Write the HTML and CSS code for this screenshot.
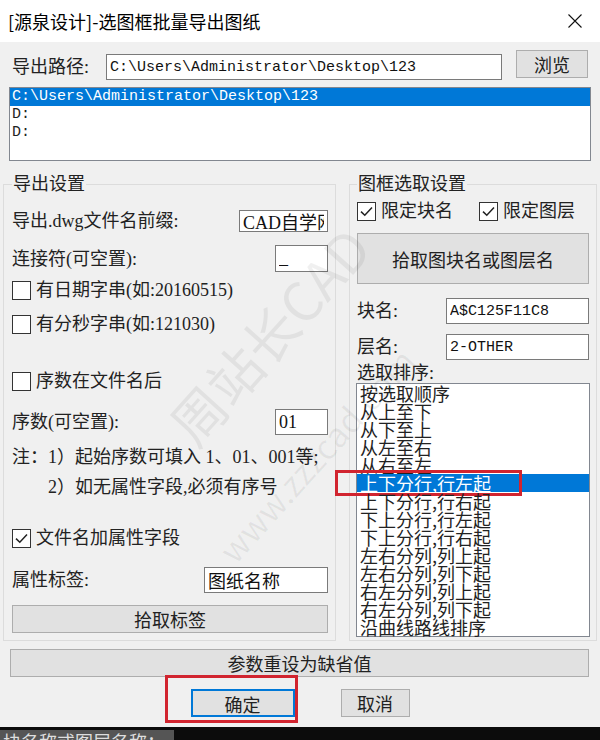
FILE: index.html
```html
<!DOCTYPE html>
<html lang="zh-CN">
<head>
  <meta charset="UTF-8">
  <title>[源泉设计]-选图框批量导出图纸</title>
  <link rel="stylesheet" href="styles.css">
</head>
<body>
  <div class="dialog">
    <div class="titlebar">
      <span class="title">[源泉设计]-选图框批量导出图纸</span>
      <span class="close">
        <svg width="16" height="16" viewBox="0 0 16 16"><path d="M1.5 1.5L14.5 14.5M14.5 1.5L1.5 14.5" stroke="#111" stroke-width="1.1" fill="none"/></svg>
      </span>
    </div>

    <div class="path-row">
      <span class="path-label">导出路径:</span>
      <input class="field path-field mono" type="text" value="C:\Users\Administrator\Desktop\123">
      <button class="btn browse">浏览</button>
    </div>

    <ul class="listbox path-list mono">
      <li class="selected">C:\Users\Administrator\Desktop\123</li>
      <li>D:</li>
      <li>D:</li>
    </ul>

    <div class="groups">
      <!-- left: export options -->
      <fieldset class="group export">
        <legend>导出设置</legend>
        <div class="row r-prefix">
          <span>导出.dwg文件名前缀:</span>
          <input class="field f-prefix" type="text" value="CAD自学网站">
        </div>
        <div class="row r-joiner">
          <span>连接符(可空置):</span>
          <input class="field f-small" type="text" value="_">
        </div>
        <label class="check r-date"><span class="box"></span>有日期字串(如:20160515)</label>
        <label class="check r-time"><span class="box"></span>有分秒字串(如:121030)</label>
        <label class="check r-after"><span class="box"></span>序数在文件名后</label>
        <div class="row r-seq">
          <span>序数(可空置):</span>
          <input class="field f-seq" type="text" value="01">
        </div>
        <p class="note r-note1">注：1）起始序数可填入 1、01、001等;</p>
        <p class="note r-note2">2）如无属性字段,必须有序号</p>
        <label class="check r-attr">
          <span class="box"><svg width="15" height="15" viewBox="0 0 15 15"><path d="M2 7.6L5.8 11.3L13 3.6" stroke="#222" stroke-width="1.5" fill="none"/></svg></span>文件名加属性字段
        </label>
        <div class="row r-tag">
          <span>属性标签:</span>
          <input class="field f-tag" type="text" value="图纸名称">
        </div>
        <button class="btn r-pick">拾取标签</button>
      </fieldset>

      <!-- right: frame selection -->
      <fieldset class="group frame">
        <legend>图框选取设置</legend>
        <div class="checks">
          <label class="check">
            <span class="box"><svg width="15" height="15" viewBox="0 0 15 15"><path d="M2 7.6L5.8 11.3L13 3.6" stroke="#222" stroke-width="1.5" fill="none"/></svg></span>限定块名
          </label>
          <label class="check">
            <span class="box"><svg width="15" height="15" viewBox="0 0 15 15"><path d="M2 7.6L5.8 11.3L13 3.6" stroke="#222" stroke-width="1.5" fill="none"/></svg></span>限定图层
          </label>
        </div>
        <button class="btn pick-block">拾取图块名或图层名</button>
        <div class="row r-block">
          <span>块名:</span>
          <input class="field f-name mono" type="text" value="A$C125F11C8">
        </div>
        <div class="row r-layer">
          <span>层名:</span>
          <input class="field f-name mono" type="text" value="2-OTHER">
        </div>
        <div class="sort-label">选取排序:</div>
        <ul class="listbox sort-list">
          <li>按选取顺序</li>
          <li>从上至下</li>
          <li>从下至上</li>
          <li>从左至右</li>
          <li>从右至左</li>
          <li class="selected">上下分行,行左起<span class="mark mark-sel"></span></li>
          <li>上下分行,行右起</li>
          <li>下上分行,行左起</li>
          <li>下上分行,行右起</li>
          <li>左右分列,列上起</li>
          <li>左右分列,列下起</li>
          <li>右左分列,列上起</li>
          <li>右左分列,列下起</li>
          <li>沿曲线路线排序</li>
        </ul>
      </fieldset>
    </div>

    <button class="btn reset">参数重设为缺省值</button>

    <div class="actions">
      <span class="ok-wrap">
        <button class="btn ok">确定</button>
        <span class="mark mark-ok"></span>
      </span>
      <button class="btn cancel">取消</button>
    </div>

    <div class="cmdbar"><span class="cmd-text">块名称或图层名称：</span></div>

    <div class="watermark">
      <span class="wm-1">周站长CAD</span>
      <span class="wm-2">www.zzzcad.com</span>
    </div>
  </div>
</body>
</html>
```

FILE: styles.css
```css
/* reset */
* {
  margin: 0;
  padding: 0;
  box-sizing: border-box;
}

body {
  width: 600px;
  height: 740px;
  overflow: hidden;
  background: #f0f0f0;
  font-family: "Liberation Serif", "Noto Sans CJK SC", serif;
  font-size: 18px;
  color: #222;
}

.dialog {
  position: relative;
  width: 600px;
  height: 740px;
  display: flex;
  flex-direction: column;
  background: #f0f0f0;
}

/* title bar */
.titlebar {
  height: 42px;
  flex: 0 0 42px;
  background: #fff;
  display: flex;
  align-items: center;
  justify-content: space-between;
  padding: 0 17px 0 8px;
  font-family: "Noto Sans CJK SC", sans-serif;
  color: #000;
}

.title {
  font-size: 18px;
  line-height: 24px;
}

.close {
  display: flex;
  width: 16px;
  height: 16px;
}

/* common controls */
.field {
  display: block;
  height: 26px;
  border: 1px solid #7a7a7a;
  background: #fff;
  padding: 0 3px;
  font: inherit;
  color: #111;
  outline: none;
}

.mono {
  font-family: "Liberation Mono", "Noto Sans CJK SC", monospace;
  font-size: 15px;
}

.btn {
  height: 28px;
  background: #e1e1e1;
  border: 1px solid #adadad;
  font: inherit;
  font-family: "Noto Sans CJK SC", sans-serif;
  font-size: 18px;
  color: #222;
  cursor: pointer;
}

.listbox {
  list-style: none;
  background: #fff;
  border: 1px solid #828790;
}

.listbox li {
  height: 18px;
  line-height: 18px;
  white-space: nowrap;
}

.listbox .selected {
  background: #0078d7;
  color: #fff;
}

/* path */
.path-row {
  display: flex;
  align-items: flex-start;
  margin-top: 8px;
  padding-left: 12px;
}

.path-label {
  flex: 0 0 94px;
  line-height: 20px;
  margin-top: 7px;
}

.path-field {
  width: 396px;
  margin-top: 4px;
}

.browse {
  width: 72px;
  margin-left: 14px;
}

.path-list {
  height: 74px;
  margin: 7px 9px 0;
}

.path-list li {
  padding-left: 2px;
}

/* group boxes */
.groups {
  display: flex;
  gap: 13px;
  margin: 13px 3px 0;
}

.group {
  display: flex;
  flex-direction: column;
  min-width: 0;
  border: 1px solid #dcdcdc;
  padding: 0 7px 7px 8px;
}

.group legend {
  padding: 0 1px;
  line-height: 20px;
}

.export {
  width: 333px;
}

.frame {
  width: 248px;
  padding: 0 7px 3px 7px;
}

.row {
  display: flex;
  align-items: center;
  justify-content: space-between;
  line-height: 20px;
}

.check {
  display: flex;
  align-items: center;
  gap: 5px;
  height: 20px;
  line-height: 20px;
}

.box {
  width: 19px;
  height: 19px;
  flex: 0 0 19px;
  border: 1px solid #333;
  background: #fff;
  display: flex;
  align-items: center;
  justify-content: center;
}

.note {
  height: 20px;
  line-height: 20px;
  white-space: nowrap;
}

/* left group rows */
.r-prefix { margin-top: 16px; }
.f-prefix { width: 89px; height: 22px; }
.r-joiner { margin-top: 13px; }
.f-small { width: 53px; height: 27px; }
.r-date { margin-top: 8px; }
.r-time { margin-top: 14px; }
.r-after { margin-top: 37px; }
.r-seq { margin-top: 18px; }
.f-seq { width: 53px; }
.r-note1 { margin-top: 12px; }
.r-note2 { margin-top: 10px; padding-left: 36px; }
.r-attr { margin-top: 31px; }
.r-tag { margin-top: 19px; }
.f-tag { width: 124px; }
.r-pick { margin-top: 12px; }

/* right group rows */
.checks {
  display: flex;
  gap: 26px;
  margin-top: 7px;
}

.pick-block {
  height: 51px;
  margin-top: 12px;
}

.r-block { margin-top: 14px; }
.r-layer { margin-top: 10px; }
.f-name { width: 143px; }

.sort-label {
  margin-top: 4px;
  line-height: 18px;
}

.sort-list {
  height: 254px;
  margin: 1px -1px 0;
  font-family: "Noto Sans CJK SC", sans-serif;
}

.sort-list li {
  position: relative;
  padding-left: 3px;
}

/* bottom buttons */
.reset {
  margin: 8px 11px 0 10px;
}

.actions {
  display: flex;
  justify-content: center;
  gap: 46px;
  margin-top: 12px;
}

.ok-wrap {
  position: relative;
  display: flex;
}

.ok {
  width: 104px;
  border: 2px solid #0078d7;
}

.cancel {
  width: 69px;
}

/* red annotation boxes */
.mark {
  position: absolute;
  border: 3px solid #d1242f;
  pointer-events: none;
}

.mark-sel {
  left: -22px;
  top: -4px;
  width: 187px;
  height: 26px;
}

.mark-ok {
  left: -26px;
  top: -14px;
  right: -3px;
  bottom: -6px;
}

/* command line strip */
.cmdbar {
  height: 13px;
  margin-top: 10px;
  background: #0c0c0c;
  overflow: hidden;
}

.cmd-text {
  display: inline-block;
  width: 174px;
  height: 13px;
  padding: 2px 0 0 3px;
  background: #555;
  color: #ddd;
  font-family: "Noto Sans CJK SC", sans-serif;
  font-size: 18px;
  line-height: 18px;
  white-space: nowrap;
  overflow: hidden;
}

/* faint watermark over the dialog */
.watermark {
  position: absolute;
  inset: 0;
  overflow: hidden;
  pointer-events: none;
}

.watermark span {
  position: absolute;
  color: rgba(0, 0, 0, 0.06);
  font-family: "Noto Sans CJK SC", sans-serif;
  white-space: nowrap;
  transform: rotate(-48deg);
}

.wm-1 {
  left: 135px;
  top: 295px;
  font-size: 54px;
  line-height: 80px;
}

.wm-2 {
  left: 180px;
  top: 430px;
  font-size: 34px;
  line-height: 50px;
}
```
